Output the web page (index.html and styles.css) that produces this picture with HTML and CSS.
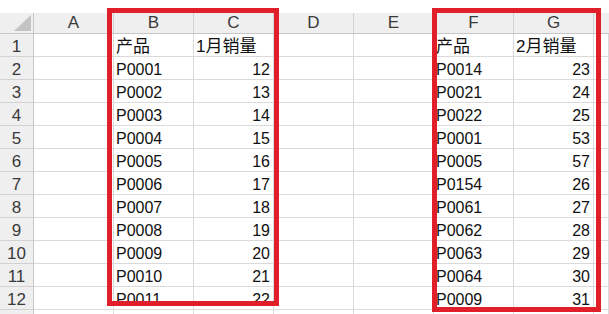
FILE: index.html
```html
<!DOCTYPE html>
<html lang="zh">
<head>
<meta charset="utf-8">
<title>Sheet</title>
<link rel="stylesheet" href="styles.css">
</head>
<body>
<div class="page">
  <div class="sheet">
    <div class="corner"><svg class="tri" width="17" height="16" viewBox="0 0 17 16"><polygon points="17,0 17,16 0,16" fill="#c3c3c3"/></svg></div>
    <div class="ch">A</div><div class="ch">B</div><div class="ch">C</div><div class="ch">D</div><div class="ch">E</div><div class="ch">F</div><div class="ch">G</div><div class="ch last"></div>

    <div class="rh">1</div><div class="c"></div><div class="c t cj">产品</div><div class="c t cj">1月销量</div><div class="c"></div><div class="c"></div><div class="c t cj">产品</div><div class="c t cj">2月销量</div><div class="c"></div>
    <div class="rh">2</div><div class="c"></div><div class="c t">P0001</div><div class="c n">12</div><div class="c"></div><div class="c"></div><div class="c t">P0014</div><div class="c n">23</div><div class="c"></div>
    <div class="rh">3</div><div class="c"></div><div class="c t">P0002</div><div class="c n">13</div><div class="c"></div><div class="c"></div><div class="c t">P0021</div><div class="c n">24</div><div class="c"></div>
    <div class="rh">4</div><div class="c"></div><div class="c t">P0003</div><div class="c n">14</div><div class="c"></div><div class="c"></div><div class="c t">P0022</div><div class="c n">25</div><div class="c"></div>
    <div class="rh">5</div><div class="c"></div><div class="c t">P0004</div><div class="c n">15</div><div class="c"></div><div class="c"></div><div class="c t">P0001</div><div class="c n">53</div><div class="c"></div>
    <div class="rh">6</div><div class="c"></div><div class="c t">P0005</div><div class="c n">16</div><div class="c"></div><div class="c"></div><div class="c t">P0005</div><div class="c n">57</div><div class="c"></div>
    <div class="rh">7</div><div class="c"></div><div class="c t">P0006</div><div class="c n">17</div><div class="c"></div><div class="c"></div><div class="c t">P0154</div><div class="c n">26</div><div class="c"></div>
    <div class="rh">8</div><div class="c"></div><div class="c t">P0007</div><div class="c n">18</div><div class="c"></div><div class="c"></div><div class="c t">P0061</div><div class="c n">27</div><div class="c"></div>
    <div class="rh">9</div><div class="c"></div><div class="c t">P0008</div><div class="c n">19</div><div class="c"></div><div class="c"></div><div class="c t">P0062</div><div class="c n">28</div><div class="c"></div>
    <div class="rh">10</div><div class="c"></div><div class="c t">P0009</div><div class="c n">20</div><div class="c"></div><div class="c"></div><div class="c t">P0063</div><div class="c n">29</div><div class="c"></div>
    <div class="rh">11</div><div class="c"></div><div class="c t">P0010</div><div class="c n">21</div><div class="c"></div><div class="c"></div><div class="c t">P0064</div><div class="c n">30</div><div class="c"></div>
    <div class="rh">12</div><div class="c"></div><div class="c t">P0011</div><div class="c n">22</div><div class="c"></div><div class="c"></div><div class="c t">P0009</div><div class="c n">31</div><div class="c"></div>
    <div class="rh"></div><div class="c"></div><div class="c"></div><div class="c"></div><div class="c"></div><div class="c"></div><div class="c"></div><div class="c"></div><div class="c"></div>
  </div>
  <div class="mark mark-bc"></div>
  <div class="mark mark-fg"></div>
</div>
</body>
</html>
```

FILE: styles.css
```css
html, body {
  margin: 0;
  padding: 0;
  background: #ffffff;
  overflow: hidden;
}
.page {
  position: relative;
  width: 609px;
  height: 314px;
  padding-top: 13px;
  box-sizing: border-box;
  overflow: hidden;
  font-family: "Liberation Sans", "Noto Sans CJK SC", sans-serif;
}
.sheet {
  display: grid;
  grid-template-columns: 34px repeat(7, 80px) 1fr;
  grid-template-rows: 21px repeat(12, 23px) 10px;
}
.sheet > div {
  box-sizing: border-box;
  border-right: 1px solid #dadada;
  border-bottom: 1px solid #dadada;
  overflow: hidden;
  white-space: nowrap;
}
.corner {
  background: #efefef;
  position: relative;
  border-color: #c6c6c6 !important;
}
.tri {
  position: absolute;
  right: 2px;
  bottom: 2px;
  display: block;
}
.ch {
  background: #efefef;
  color: #3a3a3a;
  font-size: 17px;
  line-height: 19px;
  text-align: center;
  border-bottom-color: #c6c6c6 !important;
  border-right-color: #d2d2d2 !important;
}
.ch.last {
  border-right: none !important;
}
.rh {
  background: #efefef;
  color: #3a3a3a;
  font-size: 17px;
  line-height: 18px;
  display: flex;
  align-items: flex-end;
  justify-content: center;
  border-right-color: #c6c6c6 !important;
  border-bottom-color: #d2d2d2 !important;
}
.c {
  color: #111;
  font-size: 16px;
  line-height: 18px;
  display: flex;
  align-items: flex-end;
}
.t {
  padding-left: 2px;
}
.n {
  justify-content: flex-end;
  padding-right: 3px;
}
.cj {
  font-size: 17px;
}
.mark {
  position: absolute;
  box-sizing: border-box;
  border: 5px solid #e01f2b;
}
.mark-bc {
  left: 107px;
  top: 8px;
  width: 172px;
  height: 298px;
}
.mark-fg {
  left: 432px;
  top: 8px;
  width: 169px;
  height: 304px;
}
```
